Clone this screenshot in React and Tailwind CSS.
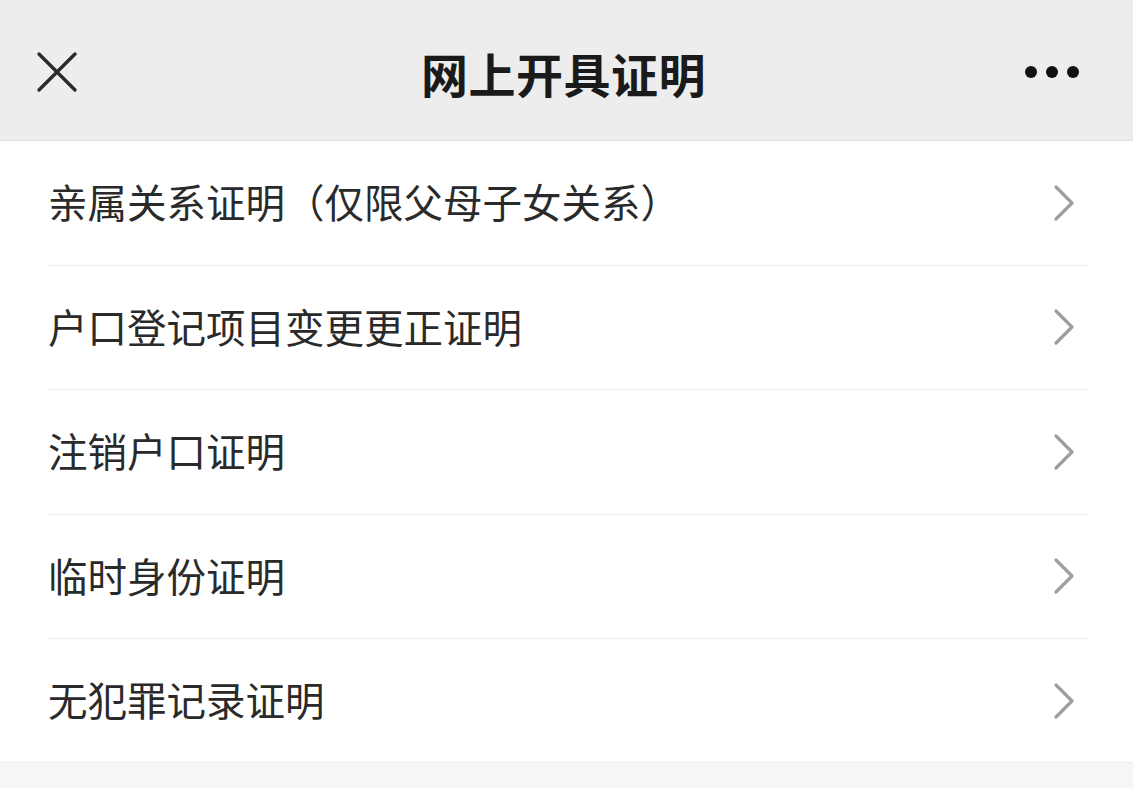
const items = [
  '亲属关系证明（仅限父母子女关系）',
  '户口登记项目变更更正证明',
  '注销户口证明',
  '临时身份证明',
  '无犯罪记录证明',
]

function Chevron() {
  return (
    <svg width="24" height="38" viewBox="0 0 24 38" className="shrink-0">
      <path d="M4 3 L20 19 L4 35" fill="none" stroke="#9e9e9e" strokeWidth="3.2" strokeLinecap="round" strokeLinejoin="round" />
    </svg>
  )
}

export default function App() {
  return (
    <div
      className="w-[1133px] h-[788px] bg-[#f5f6f8] overflow-hidden text-[#222]"
      style={{ fontFamily: '"Noto Sans CJK SC", "Noto Sans", sans-serif' }}
    >
      {/* 顶栏 */}
      <div className="h-[141px] bg-[#ededed] border-b border-[#e2e2e2] flex items-center justify-between px-[36px] relative">
        <svg width="42" height="42" viewBox="0 0 42 42" className="mt-[4px]">
          <path d="M3 3 L39 39 M39 3 L3 39" stroke="#2b2b2b" strokeWidth="3.4" strokeLinecap="round" />
        </svg>
        <div className="absolute left-0 right-0 top-0 h-[141px] flex items-center justify-center pt-[6px] pointer-events-none">
          <span className="text-[47px] font-semibold tracking-[0.5px] text-[#1a1a1a] pr-[6px]">网上开具证明</span>
        </div>
        <div className="flex items-center gap-[9px] mr-[18px] mt-[4px]">
          <span className="w-[12px] h-[12px] rounded-full bg-[#111]" />
          <span className="w-[12px] h-[12px] rounded-full bg-[#111]" />
          <span className="w-[12px] h-[12px] rounded-full bg-[#111]" />
        </div>
      </div>

      {/* 列表 */}
      <div className="bg-white">
        {items.map((t, i) => (
          <div key={t} className="pl-[48px]">
            <div
              className={
                i < items.length - 1
                  ? 'h-[124.5px] flex items-center justify-between pr-[57px] pb-[4px] border-b border-[#ececec] mr-[45px]'
                  : 'h-[123px] flex items-center justify-between pr-[57px] pb-[4px] mr-[45px]'
              }
            >
              <span className="text-[39.5px] text-[#2a2a2a] leading-none">{t}</span>
              <div className="-mr-[45px] mt-[4px]">
                <Chevron />
              </div>
            </div>
          </div>
        ))}
      </div>
      <div className="h-px bg-[#ececec]" />
    </div>
  )
}
